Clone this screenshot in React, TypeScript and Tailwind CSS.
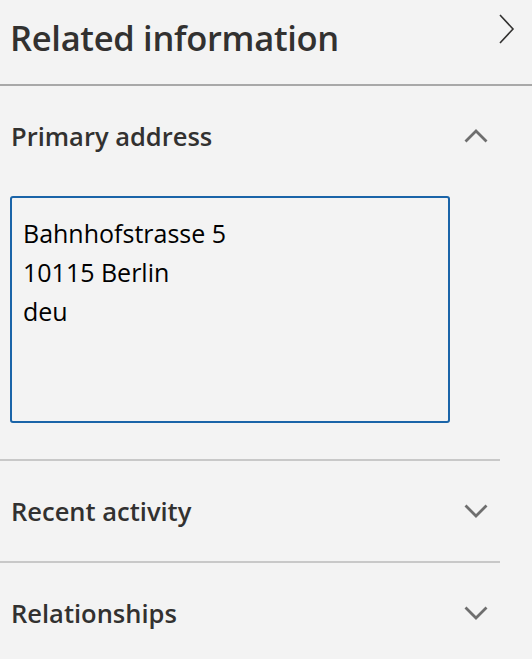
const font = { fontFamily: '"Open Sans", "Noto Sans", sans-serif' };

function Chevron({ up }: { up?: boolean }) {
  return (
    <svg width="24" height="14" viewBox="0 0 24 14" className="text-[#6e6e6e]">
      <path
        d={up ? "M1.5 12.5 L12 2 L22.5 12.5" : "M1.5 1.5 L12 12 L22.5 1.5"}
        fill="none"
        stroke="currentColor"
        strokeWidth="2.8"
      />
    </svg>
  );
}

function SectionHeader({ title, open }: { title: string; open?: boolean }) {
  return (
    <div className="flex h-[100px] items-center justify-between pl-[11px] pr-[12px]">
      <h3 className="text-[25.5px] font-semibold text-[#323130]">{title}</h3>
      <Chevron up={open} />
    </div>
  );
}

export default function App() {
  return (
    <div className="h-[659px] w-[532px] overflow-hidden bg-[#f3f3f3]" style={font}>
      <div className="flex h-[86px] items-start justify-between border-b-2 border-[#a8a8a8] pl-[10px]">
        <h2 className="mt-[12px] text-[34.5px] font-semibold tracking-[-0.3px] text-[#323130]">
          Related information
        </h2>
        <svg width="18" height="30" viewBox="0 0 18 30" className="mr-[16px] mt-[14px]">
          <path d="M2 1 L15 15 L2 29" fill="none" stroke="#323130" strokeWidth="1.6" />
        </svg>
      </div>

      <div className="w-[500px]">
        <div className="border-b-2 border-[#c8c8c8] pb-[36px]">
          <SectionHeader title="Primary address" open />
          <div className="ml-[10px] mt-[10px] h-[227px] w-[440px] rounded-[3px] border-2 border-[#1a64a8] px-[11px] pt-[16px] text-[25px] leading-[39px] text-black">
            <div>Bahnhofstrasse 5</div>
            <div>10115 Berlin</div>
            <div>deu</div>
          </div>
        </div>
        <div className="border-b-2 border-[#c8c8c8]">
          <SectionHeader title="Recent activity" />
        </div>
        <SectionHeader title="Relationships" />
      </div>
    </div>
  );
}
